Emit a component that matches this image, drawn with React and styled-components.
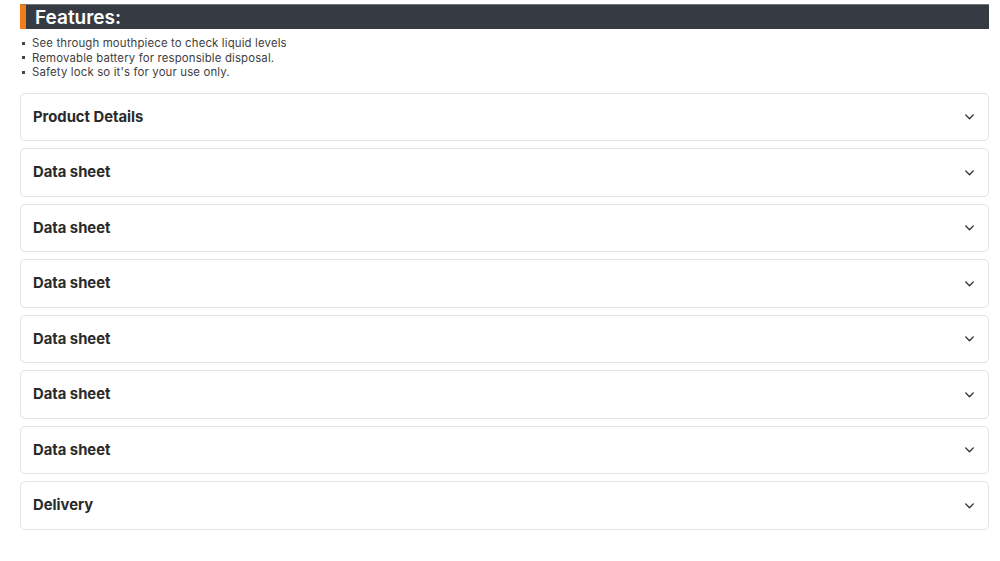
import React from "react";
import styled, { createGlobalStyle } from "styled-components";

const Global = createGlobalStyle`
  html, body { margin: 0; padding: 0; background: #fff; }
  body { font-family: Inter, "Noto Sans", sans-serif; }
`;

const Page = styled.div`
  padding: 4px 11px 0 20px;
  display: flex;
  flex-direction: column;
`;

const Header = styled.div`
  height: 25px;
  background: #363b43;
  border-left: 6px solid #f07c1a;
  border-top: 1px solid #70757c;
  box-sizing: border-box;
  display: flex;
  align-items: center;
  padding-left: 9px;
`;

const Title = styled.h2`
  margin: 0;
  color: #fff;
  font-size: 19px;
  font-weight: 600;
  line-height: 1;
`;

const List = styled.ul`
  margin: 7px 0 13px;
  padding: 0;
  list-style: none;
`;

const Item = styled.li`
  font-size: 11.4px;
  letter-spacing: 0.15px;
  line-height: 14.5px;
  color: #404040;
  display: flex;
  align-items: center;
  &::before {
    content: "";
    width: 3px;
    height: 3px;
    background: #444;
    margin: 0 7px 0 2px;
  }
`;

const Accordion = styled.div`
  display: flex;
  flex-direction: column;
  gap: 7px;
`;

const Card = styled.div`
  height: 48.5px;
  box-sizing: border-box;
  border: 1px solid #e3e3e3;
  border-radius: 5px;
  display: flex;
  align-items: center;
  justify-content: space-between;
  padding: 0 12px 0 12px;
`;

const CardTitle = styled.span`
  font-size: 14.8px;
  font-weight: 700;
  color: #2a2a2a;
`;

const Chevron = () => (
  <svg width="13" height="13" viewBox="0 0 24 24" fill="none" stroke="#333" strokeWidth="2.6" strokeLinecap="round" strokeLinejoin="round">
    <path d="M5 9l7 7 7-7" />
  </svg>
);

const items = ["Product Details", "Data sheet", "Data sheet", "Data sheet", "Data sheet", "Data sheet", "Data sheet", "Delivery"];

export default function App() {
  return (
    <>
      <Global />
      <Page>
        <Header>
          <Title>Features:</Title>
        </Header>
        <List>
          <Item>See through mouthpiece to check liquid levels</Item>
          <Item>Removable battery for responsible disposal.</Item>
          <Item>Safety lock so it's for your use only.</Item>
        </List>
        <Accordion>
          {items.map((t, i) => (
            <Card key={i}>
              <CardTitle>{t}</CardTitle>
              <Chevron />
            </Card>
          ))}
        </Accordion>
      </Page>
    </>
  );
}
